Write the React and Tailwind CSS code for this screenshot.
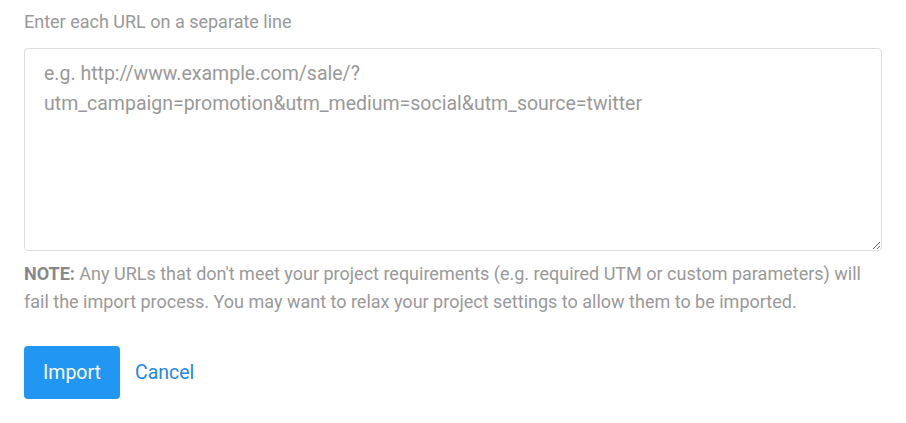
import React from 'react';

const App = () => {
  return (
    <div className="min-h-screen bg-white px-6 pt-[10px] font-['Roboto',sans-serif]">
      <label className="block text-[18px] leading-6 text-[#999999]">Enter each URL on a separate line</label>
      <textarea
        className="mt-[14px] block h-[203px] w-[858px] rounded border border-[#dddddd] pl-[19px] pr-5 py-[10px] text-[19.5px] leading-[30px] text-[#555555] placeholder:text-[#999999] focus:outline-none"
        placeholder={'e.g. http://www.example.com/sale/?\nutm_campaign=promotion&utm_medium=social&utm_source=twitter'}
      />
      <p className="mt-[9px] w-[850px] text-[18px] leading-7 text-[#999999]">
        <strong className="font-bold text-[#888888]">NOTE:</strong> Any URLs that don't meet your project requirements (e.g. required UTM or custom parameters) will fail the import process. You may want to relax your project settings to allow them to be imported.
      </p>
      <div className="mt-[30px] flex items-center gap-[15px]">
        <button className="h-[53px] w-[96px] rounded bg-[#2196f3] text-[19.5px] text-white">Import</button>
        <a href="#" className="text-[19.5px] text-[#1e88e5]">Cancel</a>
      </div>
    </div>
  );
};

export default App;
